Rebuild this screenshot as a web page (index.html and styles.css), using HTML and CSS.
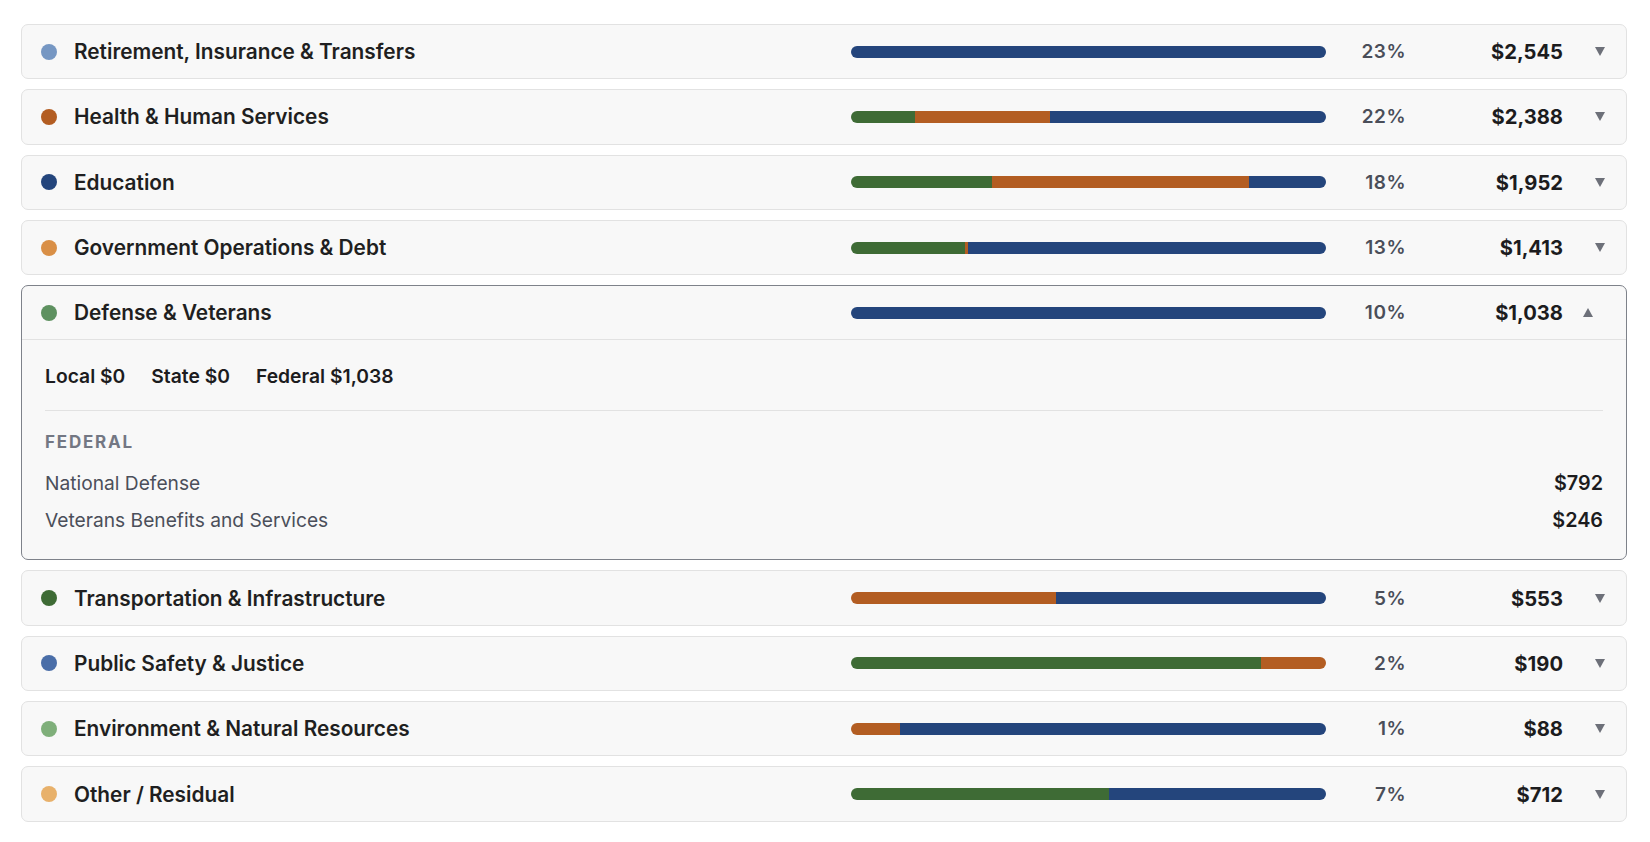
FILE: index.html
```html
<!DOCTYPE html>
<html lang="en">
<head>
    <meta charset="UTF-8">
    <meta name="viewport" content="width=device-width, initial-scale=1.0">
    <title>Where Your Taxes Go</title>
    <link rel="stylesheet" href="styles.css">
</head>
<body>
    <div class="categories">
        <div class="cat">
            <div class="cat-head">
                <span class="dot dot-retirement"></span>
                <span class="cat-name">Retirement, Insurance &amp; Transfers</span>
                <div class="bar">
                    <span class="seg federal" style="width:100%"></span>
                </div>
                <span class="pct">23%</span>
                <span class="amount">$2,545</span>
                <span class="toggle"><i class="caret"></i></span>
            </div>
        </div>

        <div class="cat">
            <div class="cat-head">
                <span class="dot dot-health"></span>
                <span class="cat-name">Health &amp; Human Services</span>
                <div class="bar">
                    <span class="seg local" style="width:13.5%"></span>
                    <span class="seg state" style="width:28.4%"></span>
                    <span class="seg federal" style="width:58.1%"></span>
                </div>
                <span class="pct">22%</span>
                <span class="amount">$2,388</span>
                <span class="toggle"><i class="caret"></i></span>
            </div>
        </div>

        <div class="cat">
            <div class="cat-head">
                <span class="dot dot-education"></span>
                <span class="cat-name">Education</span>
                <div class="bar">
                    <span class="seg local" style="width:29.7%"></span>
                    <span class="seg state" style="width:54.1%"></span>
                    <span class="seg federal" style="width:16.2%"></span>
                </div>
                <span class="pct">18%</span>
                <span class="amount">$1,952</span>
                <span class="toggle"><i class="caret"></i></span>
            </div>
        </div>

        <div class="cat">
            <div class="cat-head">
                <span class="dot dot-govops"></span>
                <span class="cat-name">Government Operations &amp; Debt</span>
                <div class="bar">
                    <span class="seg local" style="width:24%"></span>
                    <span class="seg state" style="width:0.6%"></span>
                    <span class="seg federal" style="width:75.4%"></span>
                </div>
                <span class="pct">13%</span>
                <span class="amount">$1,413</span>
                <span class="toggle"><i class="caret"></i></span>
            </div>
        </div>

        <div class="cat open">
            <div class="cat-head">
                <span class="dot dot-defense"></span>
                <span class="cat-name">Defense &amp; Veterans</span>
                <div class="bar">
                    <span class="seg federal" style="width:100%"></span>
                </div>
                <span class="pct">10%</span>
                <span class="amount">$1,038</span>
                <span class="toggle"><i class="caret"></i></span>
            </div>
            <div class="cat-body">
                <div class="levels">
                    <span>Local $0</span>
                    <span>State $0</span>
                    <span>Federal $1,038</span>
                </div>
                <div class="level-title">Federal</div>
                <div class="line">
                    <span>National Defense</span>
                    <span class="line-amount">$792</span>
                </div>
                <div class="line">
                    <span>Veterans Benefits and Services</span>
                    <span class="line-amount">$246</span>
                </div>
            </div>
        </div>

        <div class="cat">
            <div class="cat-head">
                <span class="dot dot-transport"></span>
                <span class="cat-name">Transportation &amp; Infrastructure</span>
                <div class="bar">
                    <span class="seg state" style="width:43.2%"></span>
                    <span class="seg federal" style="width:56.8%"></span>
                </div>
                <span class="pct">5%</span>
                <span class="amount">$553</span>
                <span class="toggle"><i class="caret"></i></span>
            </div>
        </div>

        <div class="cat">
            <div class="cat-head">
                <span class="dot dot-safety"></span>
                <span class="cat-name">Public Safety &amp; Justice</span>
                <div class="bar">
                    <span class="seg local" style="width:86.3%"></span>
                    <span class="seg state" style="width:13.7%"></span>
                </div>
                <span class="pct">2%</span>
                <span class="amount">$190</span>
                <span class="toggle"><i class="caret"></i></span>
            </div>
        </div>

        <div class="cat">
            <div class="cat-head">
                <span class="dot dot-environment"></span>
                <span class="cat-name">Environment &amp; Natural Resources</span>
                <div class="bar">
                    <span class="seg state" style="width:10.3%"></span>
                    <span class="seg federal" style="width:89.7%"></span>
                </div>
                <span class="pct">1%</span>
                <span class="amount">$88</span>
                <span class="toggle"><i class="caret"></i></span>
            </div>
        </div>

        <div class="cat">
            <div class="cat-head">
                <span class="dot dot-other"></span>
                <span class="cat-name">Other / Residual</span>
                <div class="bar">
                    <span class="seg local" style="width:54.3%"></span>
                    <span class="seg federal" style="width:45.7%"></span>
                </div>
                <span class="pct">7%</span>
                <span class="amount">$712</span>
                <span class="toggle"><i class="caret"></i></span>
            </div>
        </div>
    </div>
</body>
</html>
```

FILE: styles.css
```css
body {
    margin: 0;
    background: #fff;
    font-family: Inter, "Noto Sans", sans-serif;
    color: #1d1d1f;
}
.categories {
    display: flex;
    flex-direction: column;
    gap: 10px;
    padding: 24px 23px 20px 21px;
}
.cat {
    background: #f8f8f8;
    border: 1px solid #e2e2e2;
    border-radius: 7px;
}
.cat.open {
    border-color: #7e828a;
}
.cat-head {
    display: flex;
    align-items: center;
    height: 53.3px;
    padding: 0 16px 0 19px;
}
.dot {
    width: 16px;
    height: 16px;
    border-radius: 50%;
    flex-shrink: 0;
    margin-right: 17px;
}
.dot-retirement { background: #7697c3; }
.dot-health { background: #b35d22; }
.dot-education { background: #24457c; }
.dot-govops { background: #d98f46; }
.dot-defense { background: #5e9160; }
.dot-transport { background: #3e6b35; }
.dot-safety { background: #4a6ea8; }
.dot-environment { background: #7faf7a; }
.dot-other { background: #e8b16b; }

.cat-name {
    flex: 1;
    font-size: 20.8px;
    font-weight: 600;
    color: #1f1f21;
}
.bar {
    display: flex;
    width: 475px;
    height: 12px;
    border-radius: 6px;
    overflow: hidden;
    flex-shrink: 0;
}
.seg {
    height: 100%;
}
.local { background: #3e6b35; }
.state { background: #b35d22; }
.federal { background: #24457c; }

.pct {
    width: 80px;
    text-align: right;
    font-size: 19px;
    font-weight: 600;
    letter-spacing: 0.5px;
    color: #4a4e59;
}
.amount {
    width: 157px;
    text-align: right;
    font-size: 20.2px;
    font-weight: 700;
    color: #1c1c1e;
}
.toggle {
    box-sizing: border-box;
    width: 47px;
    display: flex;
    justify-content: flex-end;
}
.caret {
    display: block;
    width: 0;
    height: 0;
    border-left: 5px solid transparent;
    border-right: 5px solid transparent;
    border-top: 9px solid #6d7079;
    margin-right: 5px;
}
.open .toggle {
    justify-content: flex-start;
    padding-left: 19.5px;
}
.open .caret {
    border-top: 0;
    border-bottom: 9px solid #6d7079;
}
.cat-body {
    border-top: 1px solid #e2e2e2;
    padding: 24px 23px 20px 23px;
}
.levels {
    display: flex;
    gap: 26px;
    font-size: 19.3px;
    font-weight: 600;
    line-height: 24px;
    padding-bottom: 22px;
    border-bottom: 1px solid #e2e2e2;
    color: #1c1c1e;
}
.level-title {
    margin-top: 21px;
    font-size: 17px;
    font-weight: 700;
    letter-spacing: 1.8px;
    line-height: 20px;
    text-transform: uppercase;
    color: #737783;
    margin-bottom: 13px;
}
.line {
    display: flex;
    justify-content: space-between;
    font-size: 19.2px;
    line-height: 37px;
    color: #4b4f5a;
}
.line-amount {
    font-size: 19.8px;
    font-weight: 600;
    color: #1c1c1e;
}
```
